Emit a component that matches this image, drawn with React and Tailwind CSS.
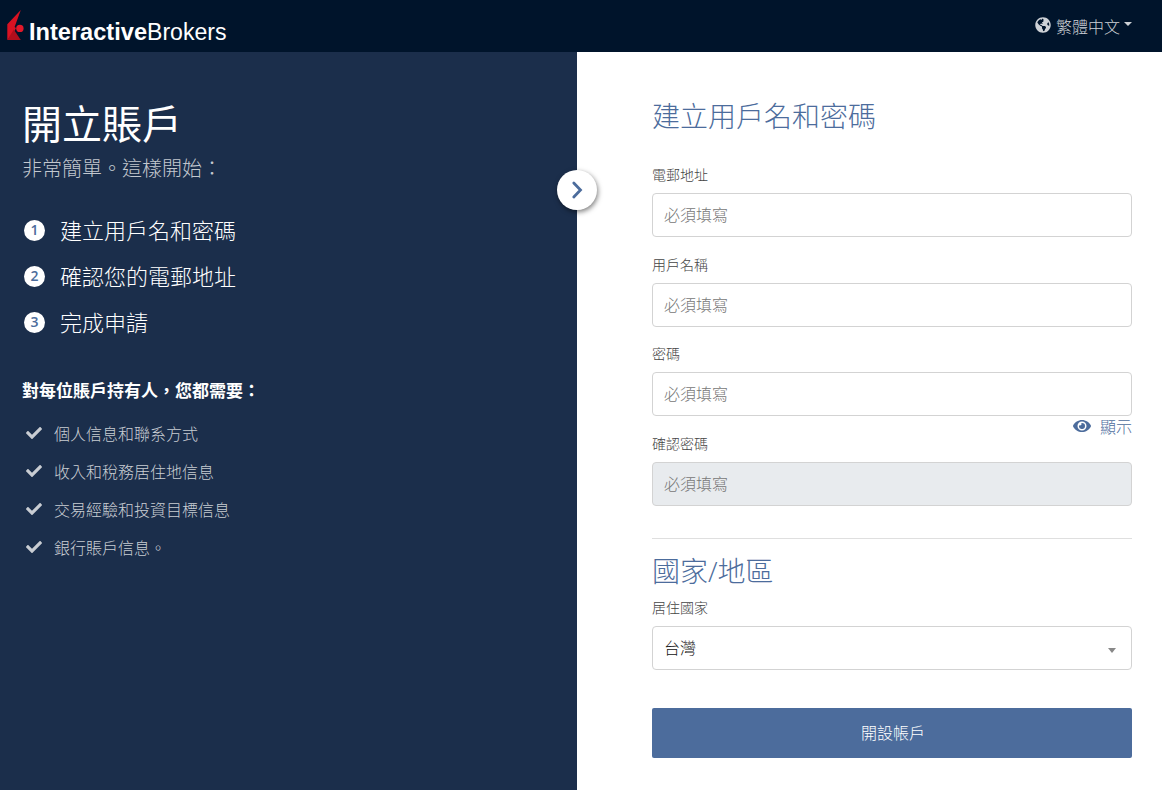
import { FaGlobeAmericas, FaEye, FaCheck } from "react-icons/fa";

const steps = ["建立用戶名和密碼", "確認您的電郵地址", "完成申請"];

const needs = [
  "個人信息和聯系方式",
  "收入和稅務居住地信息",
  "交易經驗和投資目標信息",
  "銀行賬戶信息。",
];

function Logo() {
  return (
    <div className="flex items-start pl-[7px] pt-[10px]">
      <svg width="17" height="30" viewBox="0 0 17 30" aria-hidden="true">
        <path d="M13.8 0 L0.3 14.2 V30 L6 24 L9 18 L7.6 17 Z" fill="#d81222" />
        <path d="M0.3 30 L6.8 19.5 L13.8 30 Z" fill="#b00e1c" />
        <circle cx="12.9" cy="18.4" r="3.7" fill="#e2182a" />
      </svg>
      <svg width="200" height="32" className="ml-[5px] overflow-visible" role="img">
        <text
          x="0"
          y="30"
          fill="#fff"
          fontSize="23"
          fontWeight="700"
          fontFamily="Liberation Sans, sans-serif"
          textLength="118"
          lengthAdjust="spacingAndGlyphs"
        >
          Interactive
        </text>
        <text
          x="118"
          y="30"
          fill="#fff"
          fontSize="23"
          fontFamily="Liberation Sans, sans-serif"
          textLength="79.5"
          lengthAdjust="spacingAndGlyphs"
        >
          Brokers
        </text>
      </svg>
    </div>
  );
}

function Header() {
  return (
    <header className="flex h-[52px] shrink-0 justify-between bg-[#00142b]">
      <Logo />
      <button className="mr-[30px] flex h-[52px] items-center text-base leading-none font-light text-[#cdd1d6]">
        <FaGlobeAmericas className="mr-[5px] mb-[3px] size-4" />
        <span className="pt-[3px]">繁體中文</span>
        <span className="ml-1 mb-[5px] border-x-4 border-t-4 border-x-transparent border-t-[#cdd1d6]" />
      </button>
    </header>
  );
}

function Field({ label, disabled, className }) {
  return (
    <label className={`block ${className}`}>
      <span className="block h-7 text-sm leading-[21px] font-light text-[#444]">{label}</span>
      <input
        disabled={disabled}
        placeholder="必須填寫"
        className="block h-11 w-full rounded-[4px] border border-[#d3d3d3] bg-white pt-[2px] pl-[11px] text-base font-light placeholder:text-[#777] disabled:bg-[#e8ebee]"
      />
    </label>
  );
}

function Intro() {
  return (
    <section className="relative w-[577px] shrink-0 bg-[#1b2e4b] px-[23px] pt-12 text-white">
      <h1 className="-ml-px text-[40px] leading-[50px] font-normal">開立賬戶</h1>
      <p className="-ml-px mt-1 text-xl leading-[30px] font-light text-[#c3c8cf]">非常簡單。這樣開始：</p>
      <ol className="mt-[23px]">
        {steps.map((step, i) => (
          <li key={step} className="flex h-[46px] items-center text-[22px] leading-none font-light">
            <span className="mr-[15px] ml-px flex size-[21px] items-center justify-center rounded-full bg-white font-['Open_Sans'] text-[14px] font-semibold text-[#4c6c9c]">
              {i + 1}
            </span>
            <span className="pt-1">{step}</span>
          </li>
        ))}
      </ol>
      <p className="-ml-px mt-[34px] text-[17px] leading-[26px] font-bold">對每位賬戶持有人，您都需要：</p>
      <ul className="mt-[9px]">
        {needs.map((need) => (
          <li key={need} className="flex h-[38px] items-center text-base leading-none font-light text-[#c9cdd3]">
            <FaCheck className="mr-3 mb-px ml-[3px] size-4" />
            <span className="pt-1">{need}</span>
          </li>
        ))}
      </ul>
      <button className="absolute top-[118px] -right-5 flex size-10 items-center justify-center rounded-full bg-white shadow-[1px_2px_5px_rgba(0,0,0,0.5)]">
        <svg width="12" height="18" viewBox="0 0 12 18" fill="none" stroke="#4c6c9c" strokeWidth="2.8" strokeLinecap="round" strokeLinejoin="miter">
          <path d="M2.8 2 L9.5 9 L2.8 16" />
        </svg>
      </button>
    </section>
  );
}

export default function App() {
  return (
    <div className="flex h-[790px] w-[1162px] flex-col overflow-hidden bg-white font-['Liberation_Sans','Noto_Sans_CJK_TC',sans-serif]">
      <Header />
      <main className="flex flex-1">
        <Intro />
        <form className="flex-1 pt-[47px] pr-[30px] pl-[75px]">
          <h2 className="text-[28px] leading-[38px] font-light text-[#4c6c9c]">建立用戶名和密碼</h2>
          <Field label="電郵地址" className="mt-7" />
          <Field label="用戶名稱" className="mt-[18px]" />
          <Field label="密碼" className="mt-[17px]" />
          <button type="button" className="ml-auto flex h-[18px] items-center pt-[3px] text-base leading-none font-light text-[#4c6c9c]">
            <FaEye className="mr-[9px] mb-px size-[18px]" />
            <span className="pt-[2px]">顯示</span>
          </button>
          <Field label="確認密碼" disabled />
          <hr className="mt-8 border-[#dfdfdf]" />
          <h2 className="mt-[13px] font-['Open_Sans','Noto_Sans_CJK_TC',sans-serif] text-[28px] leading-[38px] font-light text-[#4c6c9c]">國家/地區</h2>
          <div className="mt-[7px] h-[29px] text-sm leading-[22px] font-light text-[#444]">居住國家</div>
          <button type="button" className="flex h-11 w-full items-center justify-between rounded-[4px] border border-[#d3d3d3] pr-[15px] pl-[11px] text-base leading-none font-light text-[#111]">
            <span className="pt-[2px]">台灣</span>
            <span className="mt-1 border-x-4 border-t-[5px] border-x-transparent border-t-[#888]" />
          </button>
          <button type="button" className="mt-[38px] h-[50px] w-full rounded-[2px] bg-[#4c6c9c] pt-[2px] pl-[2px] text-base font-light text-white">
            開設帳戶
          </button>
        </form>
      </main>
    </div>
  );
}
